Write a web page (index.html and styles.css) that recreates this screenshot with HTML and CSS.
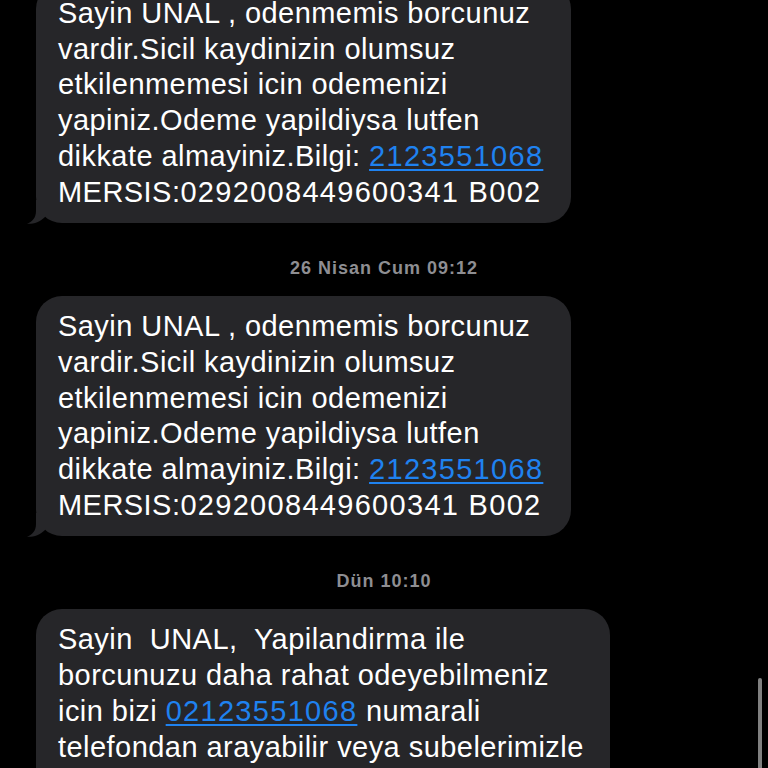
FILE: index.html
```html
<!DOCTYPE html>
<html lang="tr">
<head>
<meta charset="utf-8">
<title>Mesajlar</title>
<link rel="stylesheet" href="styles.css">
</head>
<body>
<main class="thread">
  <div class="bubble bubble-narrow first">
    <p class="msg">Sayin UNAL , odenmemis borcunuz<br>vardir.Sicil kaydinizin olumsuz<br>etkilenmemesi icin odemenizi<br>yapiniz.Odeme yapildiysa lutfen<br>dikkate almayiniz.Bilgi: <a class="link num" href="#">2123551068</a><br>MERSIS:<span class="num">0292008449600341 B002</span></p>
    <svg class="tail" viewBox="-9 -23 20 24" width="20" height="24"><path d="M0 -23 L0 -12 C0 -5 -4 -1 -9 0.8 C-3 1.3 4 -1 9 -6 L9 -23 Z"/></svg>
  </div>
  <div class="stamp">26 Nisan Cum 09:12</div>
  <div class="bubble bubble-narrow">
    <p class="msg">Sayin UNAL , odenmemis borcunuz<br>vardir.Sicil kaydinizin olumsuz<br>etkilenmemesi icin odemenizi<br>yapiniz.Odeme yapildiysa lutfen<br>dikkate almayiniz.Bilgi: <a class="link num" href="#">2123551068</a><br>MERSIS:<span class="num">0292008449600341 B002</span></p>
    <svg class="tail" viewBox="-9 -23 20 24" width="20" height="24"><path d="M0 -23 L0 -12 C0 -5 -4 -1 -9 0.8 C-3 1.3 4 -1 9 -6 L9 -23 Z"/></svg>
  </div>
  <div class="stamp">Dün 10:10</div>
  <div class="bubble bubble-wide">
    <p class="msg">Sayin&nbsp; UNAL,&nbsp; Yapilandirma ile<br>borcunuzu daha rahat odeyebilmeniz<br>icin bizi <a class="link num" href="#">02123551068</a> numarali<br>telefondan arayabilir veya subelerimizle<br>gorusebilirsiniz.</p>
    <svg class="tail" viewBox="-9 -23 20 24" width="20" height="24"><path d="M0 -23 L0 -12 C0 -5 -4 -1 -9 0.8 C-3 1.3 4 -1 9 -6 L9 -23 Z"/></svg>
  </div>
</main>
<div class="scroll-indicator"></div>
</body>
</html>
```
FILE: styles.css
```css
html, body {
  margin: 0;
  padding: 0;
  height: 768px;
  overflow: hidden;
  background: #000;
}

body {
  position: relative;
  font-family: "Liberation Sans", Arial, sans-serif;
}

.thread {
  display: flex;
  flex-direction: column;
  align-items: flex-start;
}

.bubble {
  position: relative;
  margin-left: 36px;
  background: #262629;
  border-radius: 26px;
  padding: 13px 0 13px 22px;
  box-sizing: border-box;
}

.bubble.first {
  margin-top: -17px;
}

.bubble-narrow {
  width: 535px;
}

.bubble-wide {
  width: 574px;
}

.msg {
  margin: 0;
  color: #fff;
  font-size: 29px;
  line-height: 35.7px;
  letter-spacing: 0.45px;
  white-space: nowrap;
}

.num {
  letter-spacing: 1.3px;
}

.link {
  color: #1f82f0;
  text-decoration: underline;
  text-decoration-thickness: 2px;
  text-underline-offset: 3px;
}

.tail {
  position: absolute;
  left: -9px;
  bottom: -1px;
  fill: #262629;
}

.stamp {
  align-self: stretch;
  text-align: center;
  margin: 35px 0 18px;
  color: #8e8e92;
  font-size: 18px;
  font-weight: 600;
  line-height: 20px;
  letter-spacing: 1px;
}

.scroll-indicator {
  position: absolute;
  left: 758px;
  top: 678px;
  width: 4px;
  height: 110px;
  border-radius: 2px;
  background: #808080;
}
```
